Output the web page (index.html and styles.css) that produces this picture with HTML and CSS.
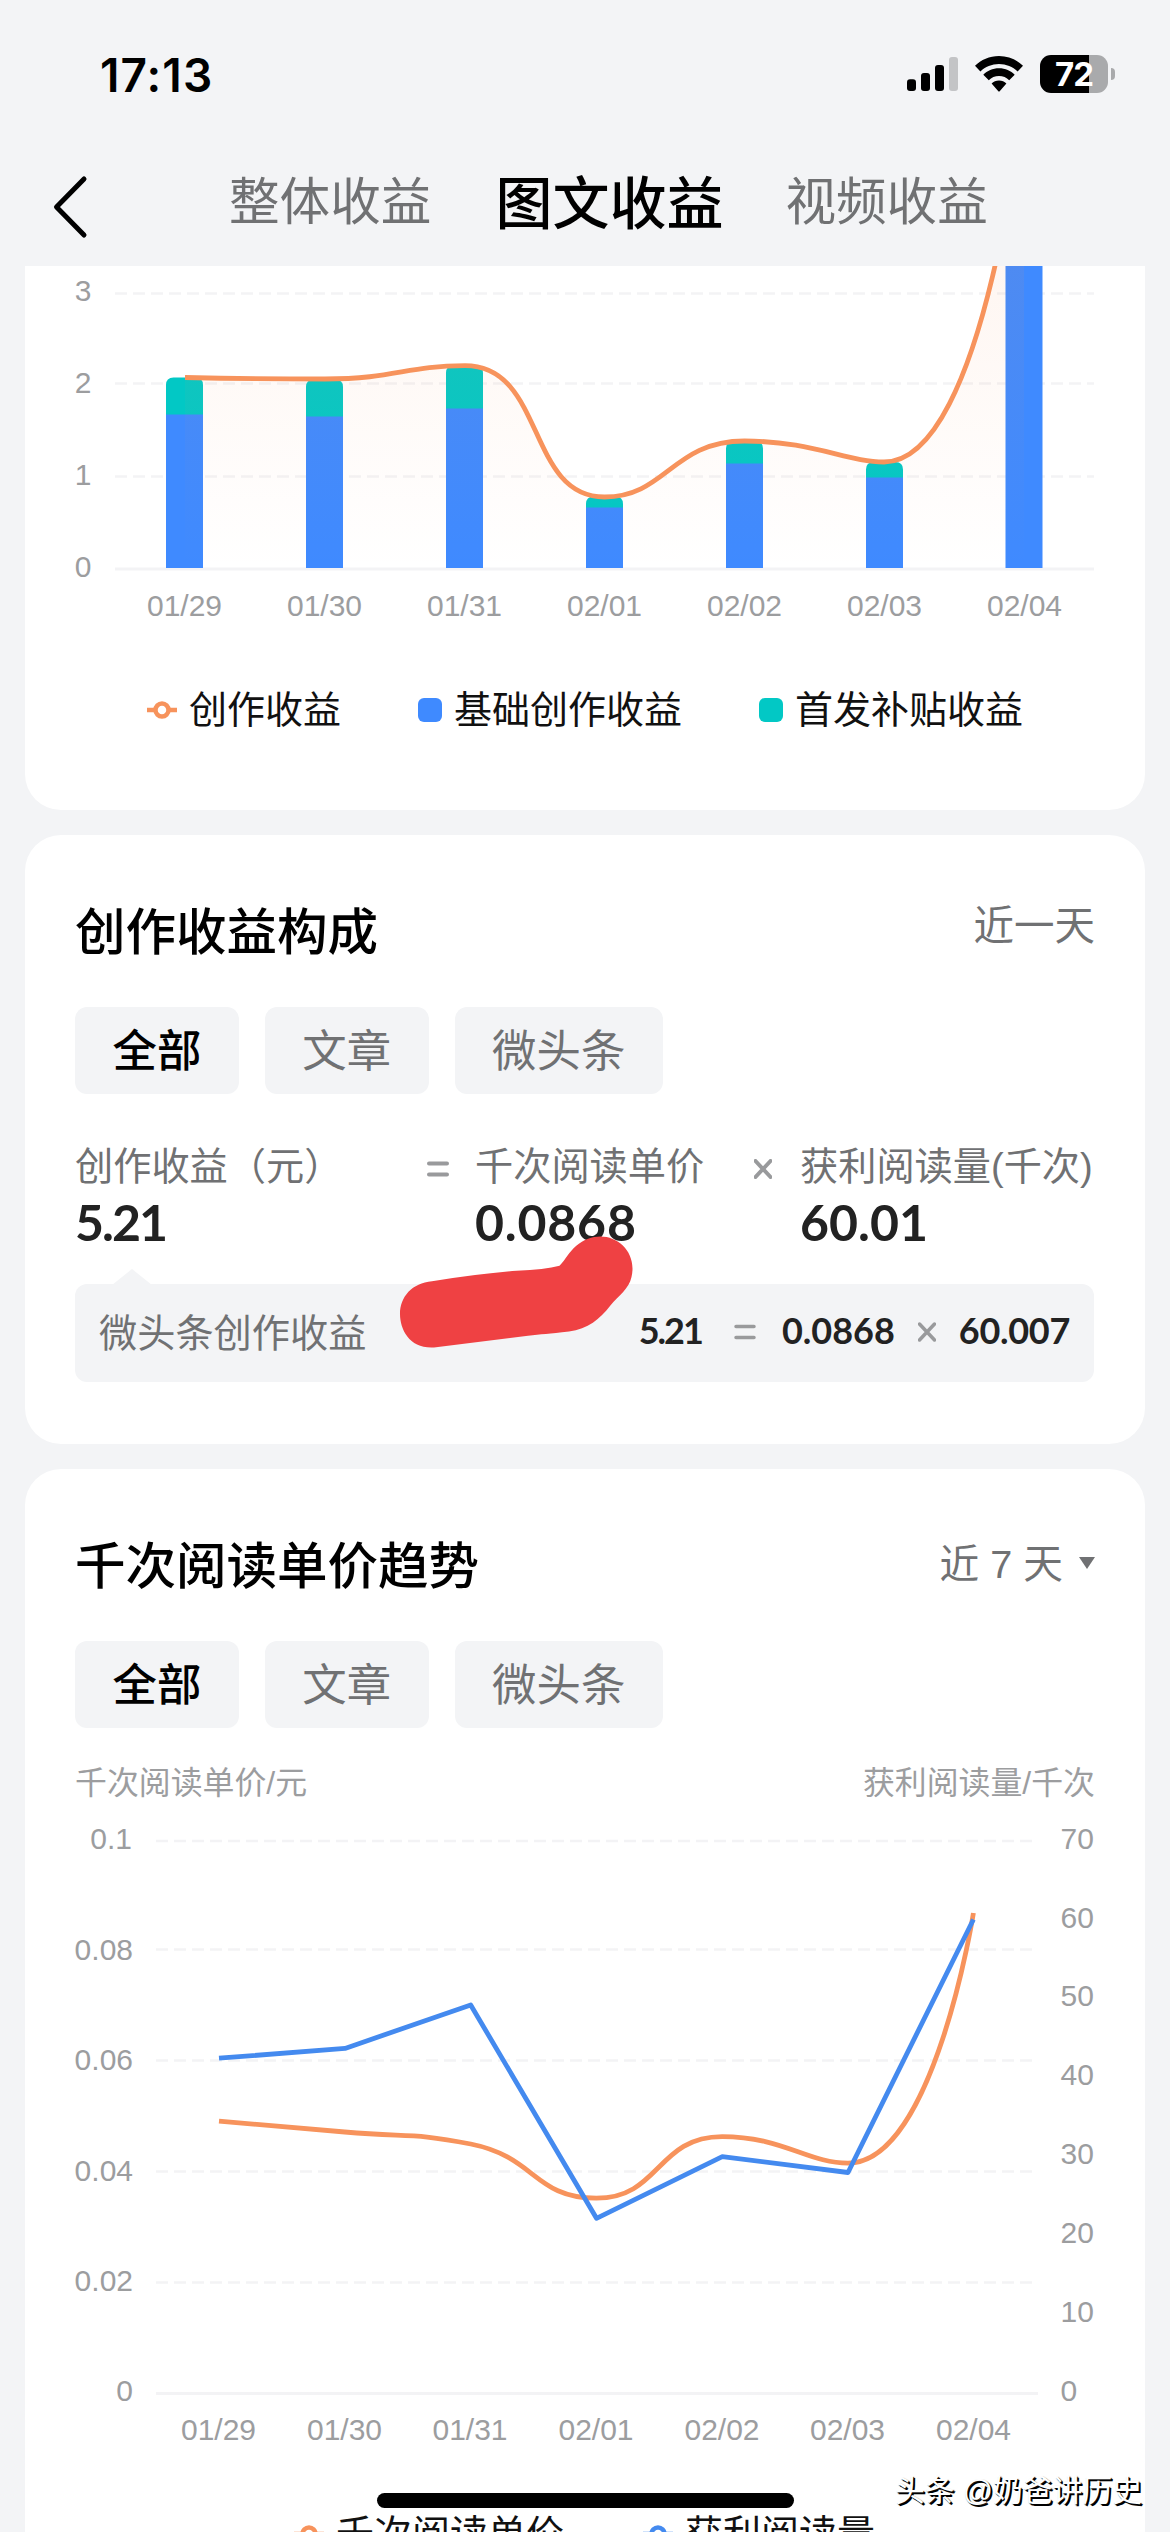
FILE: index.html
```html
<!DOCTYPE html>
<html lang="zh-CN">
<head>
<meta charset="utf-8">
<title>图文收益</title>
<link rel="stylesheet" href="styles.css">
</head>
<body>
<div class="screen">
  <div class="status">
    <span class="time">17:13</span>
    <div class="status-icons">
      <svg class="signal" width="51" height="34" viewBox="0 0 51 34">
        <rect x="0" y="22.3" width="9" height="11.7" rx="3"/>
        <rect x="14" y="16" width="9" height="18" rx="3"/>
        <rect x="28" y="8" width="9" height="26" rx="3"/>
        <rect class="dim" x="42" y="0" width="9" height="34" rx="3"/>
      </svg>
      <svg class="wifi" width="48" height="36" viewBox="0 0 48 36">
        <path d="M24 0C33.500 0 42 3.800 48 9.800L42.600 15.400C37.800 10.800 31.200 8 24 8S10.200 10.800 5.400 15.400L0 9.800C6 3.800 14.500 0 24 0Z"/>
        <path d="M24 12.200C30.300 12.200 35.800 14.700 39.700 18.700L34.200 24.200C31.600 21.600 28 20 24 20S16.400 21.600 13.800 24.200L8.300 18.700C12.200 14.700 17.700 12.200 24 12.200Z"/>
        <path d="M24 24.400C26.900 24.400 29.500 25.600 31.400 27.400L24.900 34.900Q24 36 23.100 34.900L16.600 27.400C18.500 25.600 21.100 24.400 24 24.400Z"/>
      </svg>
      <div class="battery"><span>72</span></div>
      <div class="nub"></div>
    </div>
  </div>

  <nav class="nav">
    <svg class="back" width="36" height="64" viewBox="0 0 36 64"><path d="M32 4L4.500 32L32 60"/></svg>
    <span class="tab">整体收益</span>
    <span class="tab active">图文收益</span>
    <span class="tab">视频收益</span>
  </nav>

  <main class="cards">
    <section class="card income">
      <svg class="chart" width="1120" height="374" viewBox="25 266 1120 374">
        <defs>
          <linearGradient id="area" gradientUnits="userSpaceOnUse" x1="0" y1="90" x2="0" y2="569">
            <stop offset="0" stop-color="#f7925c" stop-opacity=".13"/>
            <stop offset="1" stop-color="#f7925c" stop-opacity="0"/>
          </linearGradient>
        </defs>
        <path class="grid" d="M115 293.500H1094M115 383.500H1094M115 476.500H1094"/>
        <path class="axis" d="M115 569H1094"/>
        <g class="axis-text end">
          <text x="91.500" y="301">3</text><text x="91.500" y="392.500">2</text><text x="91.500" y="485">1</text><text x="91.500" y="577">0</text>
        </g>
        <g class="teal">
          <path d="M166 415V385q0-7.500 7.500-7.500h22q7.500 0 7.500 7.500V415Z"/>
          <path d="M306 417V387q0-7.500 7.500-7.500h22q7.500 0 7.500 7.500V417Z"/>
          <path d="M446 409V373q0-7.500 7.500-7.500h22q7.500 0 7.500 7.500V409Z"/>
          <path d="M586 508V504q0-7.500 7.500-7.500h22q7.500 0 7.500 7.500V508Z"/>
          <path d="M726 464V448.500q0-7.500 7.500-7.500h22q7.500 0 7.500 7.500V464Z"/>
          <path d="M866 478V469.500q0-7.500 7.500-7.500h22q7.500 0 7.500 7.500V478Z"/>
        </g>
        <path class="blue" d="M166 414.500h37V568h-37ZM306 416.500h37V568h-37ZM446 408.500h37V568h-37ZM586 507.500h37V568h-37ZM726 463.500h37V568h-37ZM866 477.500h37V568h-37ZM1005.500 200h37V568h-37Z"/>
        <path fill="url(#area)" d="M185 377.500C185 377.500 255 379 325 379C395 379 406 365.700 465 365.700C545.600 365.700 526.300 497 604.500 497C666 497 672.300 441 744.500 441C812 441 847.400 462 884 462C987 462 1024 90 1024 90V568H185Z"/>
        <path class="line orange" d="M185 377.500C185 377.500 255 379 325 379C395 379 406 365.700 465 365.700C545.600 365.700 526.300 497 604.500 497C666 497 672.300 441 744.500 441C812 441 847.400 462 884 462C987 462 1024 90 1024 90"/>
        <g class="axis-text mid">
          <text x="184.500" y="616">01/29</text><text x="324.500" y="616">01/30</text><text x="464.500" y="616">01/31</text><text x="604.500" y="616">02/01</text><text x="744.500" y="616">02/02</text><text x="884.500" y="616">02/03</text><text x="1024.500" y="616">02/04</text>
        </g>
      </svg>
      <div class="legend">
        <span class="key"><svg width="30" height="20" viewBox="0 0 30 20"><path class="ring" d="M0 10H8M22 10H30"/><circle class="ring" cx="15" cy="10" r="6.500"/></svg>创作收益</span>
        <span class="key"><i class="swatch blue-bg"></i>基础创作收益</span>
        <span class="key"><i class="swatch teal-bg"></i>首发补贴收益</span>
      </div>
    </section>

    <section class="card makeup">
      <header class="head"><h2>创作收益构成</h2><span class="range">近一天</span></header>
      <div class="chips"><span class="chip on">全部</span><span class="chip">文章</span><span class="chip">微头条</span></div>
      <div class="formula">
        <div class="term first"><label>创作收益（元）</label><b>5.21</b></div>
        <svg class="op eq" width="22" height="20" viewBox="0 0 22 20"><path d="M2 4.500H20M2 15.500H20"/></svg>
        <div class="term second"><label>千次阅读单价</label><b>0.0868</b></div>
        <svg class="op times" width="18" height="20" viewBox="0 0 18 20"><path d="M1.500 2L16.500 18M16.500 2L1.500 18"/></svg>
        <div class="term"><label>获利阅读量(千次)</label><b>60.01</b></div>
      </div>
      <div class="detail">
        <span class="detail-name">微头条创作收益</span>
        <b class="amount">5.21</b>
        <svg class="op equals" width="22" height="20" viewBox="0 0 22 20"><path d="M2 4.500H20M2 15.500H20"/></svg>
        <b>0.0868</b>
        <svg class="op" width="18" height="20" viewBox="0 0 18 20"><path d="M1.500 2L16.500 18M16.500 2L1.500 18"/></svg>
        <b class="reads">60.007</b>
      </div>
      <svg class="scribble" width="236" height="116" viewBox="398 1234 236 116"><path d="M432 1281.300Q475 1274 516.600 1270.700Q545 1269.500 559.500 1265.700C566 1259 569 1252 576 1246C603 1223 639 1245 631.500 1277C629 1289 619 1295 610 1306C600 1319 588 1329 569 1331.500C549 1334 541 1334 528 1335.700L434 1347.500C410 1349 400 1330 400 1314C400 1297 412 1283 432 1281.300Z"/></svg>
    </section>

    <section class="card trend">
      <header class="head"><h2>千次阅读单价趋势</h2><span class="range picker">近 7 天<i class="caret"></i></span></header>
      <div class="chips"><span class="chip on">全部</span><span class="chip">文章</span><span class="chip">微头条</span></div>
      <div class="units"><span>千次阅读单价/元</span><span>获利阅读量/千次</span></div>
      <svg class="chart" width="1120" height="650" viewBox="25 1810 1120 650">
        <path class="grid" d="M156 1841H1032M156 1949.500H1032M156 2060.500H1032M156 2171.500H1032M156 2282.500H1032"/>
        <path class="axis" d="M156 2393.500H1038"/>
        <g class="axis-text end">
          <text x="132" y="1849">0.1</text><text x="133" y="1959.500">0.08</text><text x="133" y="2070">0.06</text><text x="133" y="2180.500">0.04</text><text x="133" y="2291">0.02</text><text x="133" y="2401">0</text>
        </g>
        <g class="axis-text">
          <text x="1060.500" y="1849">70</text><text x="1060.500" y="1927.500">60</text><text x="1060.500" y="2006">50</text><text x="1060.500" y="2085">40</text><text x="1060.500" y="2164">30</text><text x="1060.500" y="2243">20</text><text x="1060.500" y="2322">10</text><text x="1060.500" y="2401">0</text>
        </g>
        <path class="line orange" d="M219 2121.200C219 2121.200 281.900 2126.300 344.800 2132C407.800 2137.700 410.300 2132 470.700 2144C536.200 2157 534.100 2198.200 596.400 2198.200C660 2198.200 656.700 2136.600 722.200 2136.600C782.500 2136.600 808.400 2163.200 848 2163.200C934 2163.200 973.400 1913 973.400 1913"/>
        <path class="line blue-line" d="M219 2058.200L345 2048.400L470.700 2005L596.500 2218.300L722.300 2156.700L848 2172.500L973.400 1919.500"/>
        <g class="axis-text mid">
          <text x="218.500" y="2440">01/29</text><text x="344.500" y="2440">01/30</text><text x="470" y="2440">01/31</text><text x="596" y="2440">02/01</text><text x="722" y="2440">02/02</text><text x="847.500" y="2440">02/03</text><text x="973.500" y="2440">02/04</text>
        </g>
      </svg>
      <div class="legend lower">
        <span class="key"><svg width="30" height="20" viewBox="0 0 30 20"><path class="ring" d="M0 10H8M22 10H30"/><circle class="ring" cx="15" cy="10" r="6.500"/></svg>千次阅读单价</span>
        <span class="key"><svg width="30" height="20" viewBox="0 0 30 20"><path class="ring b" d="M0 10H8M22 10H30"/><circle class="ring b" cx="15" cy="10" r="6.500"/></svg>获利阅读量</span>
      </div>
    </section>
  </main>
  <div class="home"></div>
  <div class="watermark">头条 @奶爸讲历史</div>
</div>
</body>
</html>
```
FILE: styles.css
```css
* { box-sizing: border-box; }
body { margin: 0; background: #f3f4f6; }
.screen {
  position: relative;
  width: 1170px;
  height: 2532px;
  overflow: hidden;
  background: #f3f4f6;
  font-family: "Liberation Sans", "Noto Sans CJK SC", sans-serif;
  color: #000;
  white-space: nowrap;
}
svg { display: block; flex: none; }

.status {
  height: 148px;
  padding: 0 55px 0 100px;
  display: flex;
  justify-content: space-between;
  align-items: center;
}
.time { padding-top: 1px; font: 600 46px "Inter", sans-serif; letter-spacing: 1.100px; }
.status-icons { display: flex; align-items: center; }
.wifi { margin-left: 17px; }
.signal .dim { fill: #c3c4c6; }
.battery {
  margin-left: 17px;
  width: 68px;
  height: 38px;
  border-radius: 11px;
  background: linear-gradient(90deg, #000 49px, #a9aaac 49px);
  color: #fff;
  font: 700 33px/38px "Inter", sans-serif;
  letter-spacing: -1px;
  text-align: center;
}
.nub { margin-left: 3px; width: 4px; height: 12px; border-radius: 0 5px 5px 0; background: #a9aaac; }

.nav {
  height: 118px;
  padding: 0 0 8px 52px;
  display: flex;
  align-items: center;
}
.back { margin: 8px 0 0 0; }
.back path { fill: none; stroke: #000; stroke-width: 5; stroke-linecap: round; stroke-linejoin: round; }
.tab { padding-bottom: 1px; font-size: 50.600px; line-height: 80px; color: #707173; margin-left: 62px; }
.back + .tab { margin-left: 141px; }
.tab.active { padding: 1px 0 0; margin-left: 64px; font-size: 57px; font-weight: 500; color: #000; }

.cards { display: flex; flex-direction: column; gap: 25px; padding: 0 25px; }
.card { position: relative; flex: none; background: #fff; border-radius: 36px; overflow: hidden; }
.income { height: 544px; border-radius: 0 0 36px 36px; }
.makeup { height: 609px; }
.trend { height: 1100px; }

.grid { fill: none; stroke: #f3f3f5; stroke-width: 2.500; stroke-dasharray: 12 6; }
.axis { fill: none; stroke: #f3f3f5; stroke-width: 3; }
.axis-text { font-size: 30px; fill: #9c9d9f; }
.end { text-anchor: end; }
.mid { text-anchor: middle; }
.blue { fill: #3f8aff; }
.teal { fill: #02c8c5; }
.line { fill: none; stroke-width: 4.800; stroke-linejoin: round; }
.orange { stroke: #f7935c; }
.blue-line { stroke: #448aef; }

.legend { display: flex; height: 60px; margin-top: 40px; padding-left: 122px; gap: 77px; font-size: 38px; line-height: 60px; color: #111; }
.key { display: flex; align-items: center; gap: 12px; }
.ring { fill: none; stroke: #f7935c; stroke-width: 4.500; }
.ring.b { stroke: #448aef; }
.swatch { width: 24px; height: 24px; border-radius: 6px; }
.blue-bg { background: #3f8aff; }
.teal-bg { background: #02c8c5; }
.lower { margin-top: 44px; padding-left: 269px; gap: 79px; }

.head { display: flex; justify-content: space-between; height: 172px; padding: 61px 50px 0; }
h2 { margin: 2px 0 0; font-size: 50.500px; line-height: 70px; font-weight: 500; }
.range { display: flex; align-items: center; height: 60px; margin-top: -4px; font-size: 40.500px; color: #707173; }
.range.picker { margin-top: 0; font-size: 39.700px; }
.caret { margin: 6px 0 0 16px; border: 8.500px solid transparent; border-top: 12px solid #707173; border-bottom: 0; }
.chips { display: flex; gap: 26px; padding-left: 50px; }
.chip { height: 87px; padding: 2px 37.500px 0; border-radius: 12px; background: #f3f4f6; font-size: 44.400px; line-height: 85px; color: #707173; }
.chip.on { font-weight: 500; color: #000; }

.formula { display: flex; padding: 49px 50px 0; height: 190px; }
.term { display: flex; flex-direction: column; }
.term label { font-size: 38.200px; line-height: 48px; color: #707173; }
.term b { margin-top: 3px; font: 700 50px/56px "Lato", sans-serif; color: #222; }
.first { width: 352px; }
.first b { letter-spacing: -2px; }
.second { width: 279px; }
.second b { letter-spacing: 0.800px; }
.op { fill: none; stroke: #999a9c; stroke-width: 4; stroke-linecap: round; }
.op.eq { margin: 16px 26px 0 0; }
.op.times { margin: 16px 28px 0 0; }

.detail {
  position: relative;
  display: flex;
  align-items: center;
  height: 98px;
  margin: 0 51px 0 50px;
  padding: 0 24px 6px;
  border-radius: 12px;
  background: #f3f4f6;
}
.detail::before {
  content: "";
  position: absolute;
  left: 37px;
  top: -15px;
  border: 20px solid transparent;
  border-top: 0;
  border-bottom: 16px solid #f3f4f6;
}
.detail-name { margin-right: auto; font-size: 38.200px; color: #707173; }
.detail b { font: 700 36px/50px "Lato", sans-serif; color: #222; }
.detail .amount { letter-spacing: -2px; }
.detail .reads { letter-spacing: -0.300px; }
.detail .op { margin: 3px 23px 0; stroke-width: 3.500; }
.detail .equals { margin: 3px 26px 0 32px; }
.scribble { position: absolute; left: 373px; top: 399px; fill: #ef4143; }

.units { display: flex; justify-content: space-between; height: 82px; padding: 31px 50px 0; font-size: 31.900px; line-height: 48px; color: #9c9d9f; }

.home { position: absolute; left: 377px; top: 2493px; width: 417px; height: 15px; border-radius: 8px; background: #000; }
.watermark {
  position: absolute;
  right: 28px;
  top: 2469px;
  font-size: 29.800px;
  line-height: 44px;
  color: #fff;
  text-shadow: 2px 2px 0 #000, 1px 1px 1px #000;
}
```
